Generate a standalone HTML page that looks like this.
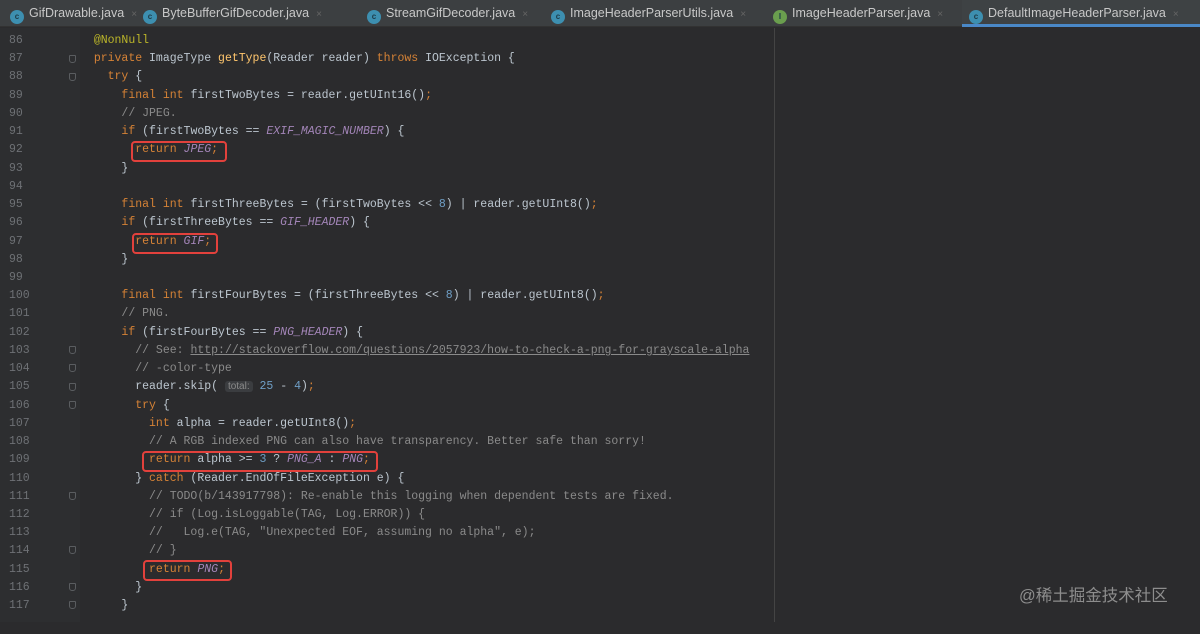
<!DOCTYPE html>
<html><head><meta charset="utf-8"><style>
*{margin:0;padding:0;box-sizing:border-box}
html,body{width:1200px;height:622px}
body{background:#2b2b2d;overflow:hidden;position:relative;font-family:"Liberation Sans",sans-serif}
.tabs{position:absolute;left:0;top:0;width:1200px;height:27px;background:#3c3f41;border-bottom:1px solid #323232}
.tab{position:absolute;top:0;height:27px;line-height:26px;font-size:12.5px;color:#c8c8c8;white-space:nowrap}
.tab .ic{display:inline-block;width:14px;height:14px;border-radius:50%;background:#3d8fb0;vertical-align:-2px;margin-right:5px;font-size:8px;line-height:14px;text-align:center;color:#1d3b48;font-weight:bold}
.tab .x{color:#666;margin-left:7px;font-size:10px}
.active{border-bottom:3px solid #4a88c7;background:#3e4244}
.gutter{position:absolute;left:0;top:28px;width:80px;height:594px;background:#2d2e30}
.vl{position:absolute;left:774px;top:28px;width:1px;height:594px;background:#444}
.code{position:absolute;left:0;top:32px;font-family:"Liberation Mono",monospace;font-size:11.5px;line-height:18.23px;color:#bcc6cf;white-space:pre}
.ln{position:absolute;left:9px;color:#6e7175;width:24px}
.tx{position:absolute;left:80px}
.k{color:#d58236}.m{color:#ffc66d}.a{color:#bbb529}.c{color:#8a8a8a}.p{color:#a385b8;font-style:italic}.n{color:#6f9fc6}.u{color:#8a8a8a;text-decoration:underline}
.hint{background:#3b3d40;color:#8a8a8a;border-radius:3px;font-family:"Liberation Sans",sans-serif;font-size:10px;padding:0 3px}
.box{position:absolute;border:2px solid #e2413c;border-radius:4px}
.fold{position:absolute;left:69px;width:7px;height:8px;border:1px solid #5a5d60;border-radius:1px 1px 3px 3px}
.wm{position:absolute;left:1019px;top:582px;font-size:16.5px;color:#8d8d8d;font-family:"Liberation Sans","Noto Sans CJK SC",sans-serif}
</style></head><body>
<div class="tabs">
<div class="tab" style="left:10px"><span class="ic">c</span>GifDrawable.java<span class="x">×</span></div>
<div class="tab" style="left:143px"><span class="ic">c</span>ByteBufferGifDecoder.java<span class="x">×</span></div>
<div class="tab" style="left:367px"><span class="ic">c</span>StreamGifDecoder.java<span class="x">×</span></div>
<div class="tab" style="left:551px"><span class="ic">c</span>ImageHeaderParserUtils.java<span class="x">×</span></div>
<div class="tab" style="left:773px"><span class="ic" style="background:#6a9e4e">I</span>ImageHeaderParser.java<span class="x">×</span></div>
<div class="tab active" style="left:962px;width:238px;padding-left:7px"><span class="ic">c</span>DefaultImageHeaderParser.java<span class="x">×</span></div>
</div>
<div class="gutter"></div>
<div class="vl"></div>
<div class="fold" style="top:55px"></div><div class="fold" style="top:73px"></div>
<div class="fold" style="top:346px"></div><div class="fold" style="top:364px"></div><div class="fold" style="top:383px"></div><div class="fold" style="top:401px"></div>
<div class="fold" style="top:492px"></div><div class="fold" style="top:546px"></div><div class="fold" style="top:583px"></div><div class="fold" style="top:601px"></div>
<div class="code">
<div class="ln" style="top:0">86</div><div class="tx" style="top:0">  <span class="a">@NonNull</span></div>
<div class="ln" style="top:18.23px">87</div><div class="tx" style="top:18.23px">  <span class="k">private</span> ImageType <span class="m">getType</span>(Reader reader) <span class="k">throws</span> IOException {</div>
<div class="ln" style="top:36.46px">88</div><div class="tx" style="top:36.46px">    <span class="k">try</span> {</div>
<div class="ln" style="top:54.69px">89</div><div class="tx" style="top:54.69px">      <span class="k">final int</span> firstTwoBytes = reader.getUInt16()<span class="k">;</span></div>
<div class="ln" style="top:72.92px">90</div><div class="tx" style="top:72.92px">      <span class="c">// JPEG.</span></div>
<div class="ln" style="top:91.15px">91</div><div class="tx" style="top:91.15px">      <span class="k">if</span> (firstTwoBytes == <span class="p">EXIF_MAGIC_NUMBER</span>) {</div>
<div class="ln" style="top:109.38px">92</div><div class="tx" style="top:109.38px">        <span class="k">return</span> <span class="p">JPEG</span><span class="k">;</span></div>
<div class="ln" style="top:127.61px">93</div><div class="tx" style="top:127.61px">      }</div>
<div class="ln" style="top:145.84px">94</div>
<div class="ln" style="top:164.07px">95</div><div class="tx" style="top:164.07px">      <span class="k">final int</span> firstThreeBytes = (firstTwoBytes &lt;&lt; <span class="n">8</span>) | reader.getUInt8()<span class="k">;</span></div>
<div class="ln" style="top:182.3px">96</div><div class="tx" style="top:182.3px">      <span class="k">if</span> (firstThreeBytes == <span class="p">GIF_HEADER</span>) {</div>
<div class="ln" style="top:200.53px">97</div><div class="tx" style="top:200.53px">        <span class="k">return</span> <span class="p">GIF</span><span class="k">;</span></div>
<div class="ln" style="top:218.76px">98</div><div class="tx" style="top:218.76px">      }</div>
<div class="ln" style="top:236.99px">99</div>
<div class="ln" style="top:255.22px">100</div><div class="tx" style="top:255.22px">      <span class="k">final int</span> firstFourBytes = (firstThreeBytes &lt;&lt; <span class="n">8</span>) | reader.getUInt8()<span class="k">;</span></div>
<div class="ln" style="top:273.45px">101</div><div class="tx" style="top:273.45px">      <span class="c">// PNG.</span></div>
<div class="ln" style="top:291.68px">102</div><div class="tx" style="top:291.68px">      <span class="k">if</span> (firstFourBytes == <span class="p">PNG_HEADER</span>) {</div>
<div class="ln" style="top:309.91px">103</div><div class="tx" style="top:309.91px">        <span class="c">// See: </span><span class="u">http://stackoverflow.com/questions/2057923/how-to-check-a-png-for-grayscale-alpha</span></div>
<div class="ln" style="top:328.14px">104</div><div class="tx" style="top:328.14px">        <span class="c">// -color-type</span></div>
<div class="ln" style="top:346.37px">105</div><div class="tx" style="top:346.37px">        reader.skip( <span class="hint">total:</span> <span class="n">25</span> - <span class="n">4</span>)<span class="k">;</span></div>
<div class="ln" style="top:364.6px">106</div><div class="tx" style="top:364.6px">        <span class="k">try</span> {</div>
<div class="ln" style="top:382.83px">107</div><div class="tx" style="top:382.83px">          <span class="k">int</span> alpha = reader.getUInt8()<span class="k">;</span></div>
<div class="ln" style="top:401.06px">108</div><div class="tx" style="top:401.06px">          <span class="c">// A RGB indexed PNG can also have transparency. Better safe than sorry!</span></div>
<div class="ln" style="top:419.29px">109</div><div class="tx" style="top:419.29px">          <span class="k">return</span> alpha &gt;= <span class="n">3</span> ? <span class="p">PNG_A</span> : <span class="p">PNG</span><span class="k">;</span></div>
<div class="ln" style="top:437.52px">110</div><div class="tx" style="top:437.52px">        } <span class="k">catch</span> (Reader.EndOfFileException e) {</div>
<div class="ln" style="top:455.75px">111</div><div class="tx" style="top:455.75px">          <span class="c">// TODO(b/143917798): Re-enable this logging when dependent tests are fixed.</span></div>
<div class="ln" style="top:473.98px">112</div><div class="tx" style="top:473.98px">          <span class="c">// if (Log.isLoggable(TAG, Log.ERROR)) {</span></div>
<div class="ln" style="top:492.21px">113</div><div class="tx" style="top:492.21px">          <span class="c">//   Log.e(TAG, "Unexpected EOF, assuming no alpha", e);</span></div>
<div class="ln" style="top:510.44px">114</div><div class="tx" style="top:510.44px">          <span class="c">// }</span></div>
<div class="ln" style="top:528.67px">115</div><div class="tx" style="top:528.67px">          <span class="k">return</span> <span class="p">PNG</span><span class="k">;</span></div>
<div class="ln" style="top:546.9px">116</div><div class="tx" style="top:546.9px">        }</div>
<div class="ln" style="top:565.13px">117</div><div class="tx" style="top:565.13px">      }</div>
</div>
<div class="box" style="left:131px;top:141px;width:96px;height:21px"></div>
<div class="box" style="left:132px;top:233px;width:86px;height:21px"></div>
<div class="box" style="left:142px;top:451px;width:236px;height:21px"></div>
<div class="box" style="left:143px;top:560px;width:89px;height:21px"></div>
<div class="wm">@稀土掘金技术社区</div>
</body></html>
